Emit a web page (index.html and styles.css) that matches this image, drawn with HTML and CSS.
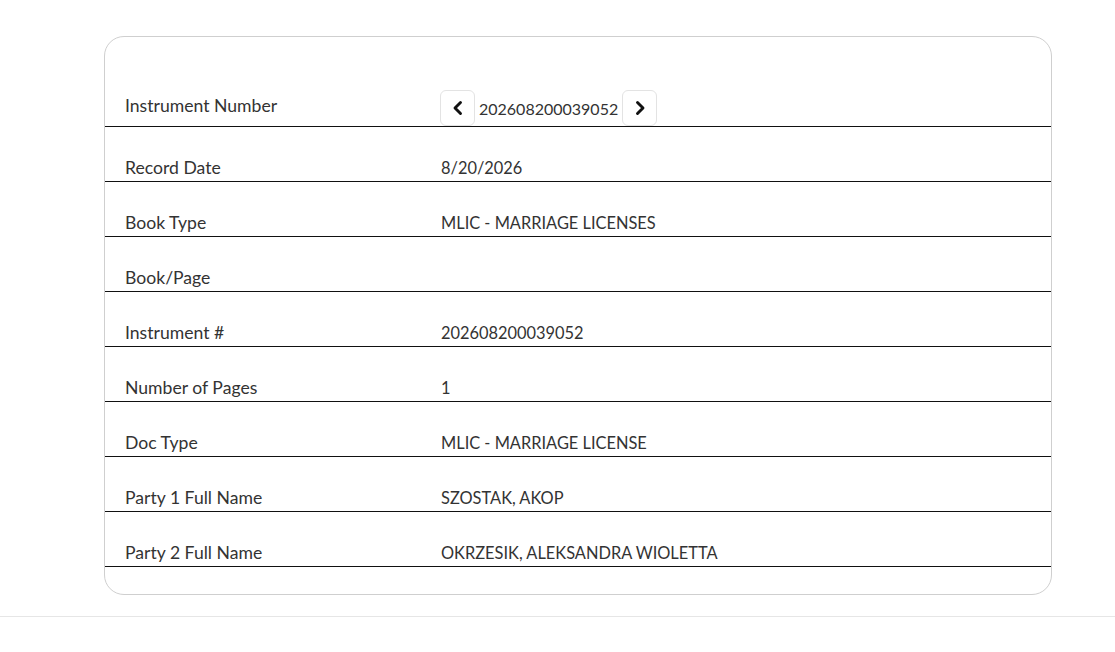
FILE: index.html
```html
<!DOCTYPE html>
<html>
<head>
<meta charset="utf-8">
<link rel="stylesheet" href="styles.css">
</head>
<body>
<div class="page">
  <div class="card">
    <div class="row row-first">
      <div class="label">Instrument Number</div>
      <div class="value nav">
        <button class="nav-btn" aria-label="Previous">
          <svg width="16" height="16" viewBox="0 0 16 16"><path d="M10.5 2.5 L5 8 L10.5 13.5" fill="none" stroke="#111" stroke-width="2.9" stroke-linecap="round" stroke-linejoin="round"/></svg>
        </button>
        <span class="nav-num">202608200039052</span>
        <button class="nav-btn" aria-label="Next">
          <svg width="16" height="16" viewBox="0 0 16 16"><path d="M5.5 2.5 L11 8 L5.5 13.5" fill="none" stroke="#111" stroke-width="2.9" stroke-linecap="round" stroke-linejoin="round"/></svg>
        </button>
      </div>
    </div>
    <div class="row"><div class="label">Record Date</div><div class="value">8/20/2026</div></div>
    <div class="row"><div class="label">Book Type</div><div class="value">MLIC - MARRIAGE LICENSES</div></div>
    <div class="row"><div class="label">Book/Page</div><div class="value"></div></div>
    <div class="row"><div class="label">Instrument #</div><div class="value">202608200039052</div></div>
    <div class="row"><div class="label">Number of Pages</div><div class="value">1</div></div>
    <div class="row"><div class="label">Doc Type</div><div class="value">MLIC - MARRIAGE LICENSE</div></div>
    <div class="row"><div class="label">Party 1 Full Name</div><div class="value">SZOSTAK, AKOP</div></div>
    <div class="row"><div class="label">Party 2 Full Name</div><div class="value">OKRZESIK, ALEKSANDRA WIOLETTA</div></div>
  </div>
  <div class="divider"></div>
</div>
</body>
</html>
```

FILE: styles.css
```css
html, body {
  margin: 0;
  padding: 0;
  background: #fff;
}
body {
  font-family: Lato, "Noto Sans", sans-serif;
  font-size: 17px;
  color: #333;
}
.page {
  padding-top: 36px;
}
.card {
  margin-left: 104px;
  width: 946px;
  border: 1px solid #cfcfcf;
  border-radius: 20px;
  padding-top: 53px;
  padding-bottom: 27px;
}
.row {
  display: grid;
  grid-template-columns: 316px 1fr;
  align-items: end;
  padding: 31px 20px 3px 20px;
  line-height: 20px;
  border-bottom: 1px solid #111;
  min-height: 20px;
}
.label {
  font-size: 17.6px;
}
.value {
  font-size: 16.4px;
}
.row-first {
  padding-top: 0;
  padding-bottom: 0;
  align-items: center;
}
.row-first .label {
  padding-bottom: 4px;
}
.nav {
  display: flex;
  align-items: center;
  gap: 4px;
  margin-left: -1px;
}
.nav-num {
  padding-top: 2px;
  font-size: 16px;
}
.nav-btn {
  width: 35px;
  height: 36px;
  border: 1px solid #e3e3e3;
  border-radius: 6px;
  background: #fff;
  padding: 0;
  display: flex;
  align-items: center;
  justify-content: center;
}
.divider {
  margin-top: 21px;
  border-top: 1px solid #e6e6e6;
}
```
